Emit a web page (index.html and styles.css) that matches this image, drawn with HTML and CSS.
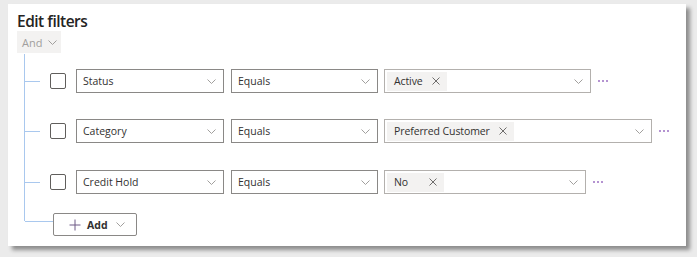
FILE: index.html
```html
<!DOCTYPE html>
<html lang="en">
<head>
    <meta charset="UTF-8">
    <title>Edit filters</title>
    <link rel="stylesheet" href="styles.css">
</head>
<body>
    <div class="frame">
        <div class="card">
            <h1>Edit filters</h1>
            <div class="and-button">And
                <svg class="chevron" width="9" height="5" viewBox="0 0 9 5"><path d="M0.5 0.5 L4.5 4.5 L8.5 0.5" /></svg>
            </div>

            <div class="tree">
                <div class="filter-row">
                    <span class="branch"></span>
                    <span class="checkbox"></span>
                    <div class="select field">
                        <span>Status</span>
                        <svg class="chevron" width="9" height="5" viewBox="0 0 9 5"><path d="M0.5 0.5 L4.5 4.5 L8.5 0.5" /></svg>
                    </div>
                    <div class="select operator">
                        <span>Equals</span>
                        <svg class="chevron" width="9" height="5" viewBox="0 0 9 5"><path d="M0.5 0.5 L4.5 4.5 L8.5 0.5" /></svg>
                    </div>
                    <div class="select value value-short">
                        <span class="pill">Active
                            <svg class="close" width="8" height="8" viewBox="0 0 8 8"><path d="M0.5 0.5 L7.5 7.5 M7.5 0.5 L0.5 7.5" /></svg>
                        </span>
                        <svg class="chevron" width="9" height="5" viewBox="0 0 9 5"><path d="M0.5 0.5 L4.5 4.5 L8.5 0.5" /></svg>
                    </div>
                    <svg class="more" width="12" height="4" viewBox="0 0 12 4"><circle cx="2" cy="2" r="1"/><circle cx="6" cy="2" r="1"/><circle cx="10" cy="2" r="1"/></svg>
                </div>

                <div class="filter-row">
                    <span class="branch"></span>
                    <span class="checkbox"></span>
                    <div class="select field">
                        <span>Category</span>
                        <svg class="chevron" width="9" height="5" viewBox="0 0 9 5"><path d="M0.5 0.5 L4.5 4.5 L8.5 0.5" /></svg>
                    </div>
                    <div class="select operator">
                        <span>Equals</span>
                        <svg class="chevron" width="9" height="5" viewBox="0 0 9 5"><path d="M0.5 0.5 L4.5 4.5 L8.5 0.5" /></svg>
                    </div>
                    <div class="select value value-long">
                        <span class="pill">Preferred Customer
                            <svg class="close" width="8" height="8" viewBox="0 0 8 8"><path d="M0.5 0.5 L7.5 7.5 M7.5 0.5 L0.5 7.5" /></svg>
                        </span>
                        <svg class="chevron" width="9" height="5" viewBox="0 0 9 5"><path d="M0.5 0.5 L4.5 4.5 L8.5 0.5" /></svg>
                    </div>
                    <svg class="more" width="12" height="4" viewBox="0 0 12 4"><circle cx="2" cy="2" r="1"/><circle cx="6" cy="2" r="1"/><circle cx="10" cy="2" r="1"/></svg>
                </div>

                <div class="filter-row">
                    <span class="branch"></span>
                    <span class="checkbox"></span>
                    <div class="select field">
                        <span>Credit Hold</span>
                        <svg class="chevron" width="9" height="5" viewBox="0 0 9 5"><path d="M0.5 0.5 L4.5 4.5 L8.5 0.5" /></svg>
                    </div>
                    <div class="select operator">
                        <span>Equals</span>
                        <svg class="chevron" width="9" height="5" viewBox="0 0 9 5"><path d="M0.5 0.5 L4.5 4.5 L8.5 0.5" /></svg>
                    </div>
                    <div class="select value value-shorter">
                        <span class="pill">No
                            <svg class="close" width="8" height="8" viewBox="0 0 8 8"><path d="M0.5 0.5 L7.5 7.5 M7.5 0.5 L0.5 7.5" /></svg>
                        </span>
                        <svg class="chevron" width="9" height="5" viewBox="0 0 9 5"><path d="M0.5 0.5 L4.5 4.5 L8.5 0.5" /></svg>
                    </div>
                    <svg class="more" width="12" height="4" viewBox="0 0 12 4"><circle cx="2" cy="2" r="1"/><circle cx="6" cy="2" r="1"/><circle cx="10" cy="2" r="1"/></svg>
                </div>

                <div class="add-row">
                    <span class="branch branch-add"></span>
                    <button class="add-button">
                        <svg class="plus" width="12" height="12" viewBox="0 0 12 12"><path d="M6 0.5 V11.5 M0.5 6 H11.5" /></svg>
                        Add
                        <svg class="chevron" width="9" height="5" viewBox="0 0 9 5"><path d="M0.5 0.5 L4.5 4.5 L8.5 0.5" /></svg>
                    </button>
                </div>
            </div>
        </div>
    </div>
</body>
</html>
```

FILE: styles.css
```css
body {
    margin: 0;
    background: #fff;
    font-family: "Open Sans", "Noto Sans", sans-serif;
    color: #323130;
}
.frame {
    width: 697px;
    height: 257px;
    box-sizing: border-box;
    padding: 4px 0 0 8px;
    background: #ebebeb;
}
.card {
    width: 678px;
    height: 242px;
    box-sizing: border-box;
    padding: 8px 0 0 9px;
    background: #fff;
    box-shadow: 4px 4px 4px rgba(0, 0, 0, 0.4);
}
h1 {
    font-size: 15.5px;
    font-weight: 600;
    line-height: 18px;
    margin: 0 0 1px 0;
    letter-spacing: -0.5px;
    color: #252423;
}
.and-button {
    width: 44px;
    height: 22px;
    box-sizing: border-box;
    display: flex;
    align-items: center;
    gap: 6px;
    padding-left: 5px;
    background: #f3f2f1;
    color: #a19f9d;
    font-size: 11px;
    margin-bottom: 1px;
}
.chevron {
    fill: none;
    stroke: #a19f9d;
    stroke-width: 1;
    flex-shrink: 0;
}
.tree {
    position: relative;
    margin-left: 7px;
    padding-top: 15px;
}
.tree::before {
    content: "";
    position: absolute;
    left: 0;
    top: 0;
    bottom: 15px;
    width: 1px;
    background: #a9c8ee;
}
.filter-row {
    display: flex;
    align-items: center;
    height: 24px;
    margin-bottom: 26px;
}
.filter-row:nth-child(2) {
    margin-bottom: 27px;
}
.filter-row:nth-child(3) {
    margin-bottom: 19px;
}
.branch {
    width: 15px;
    height: 1px;
    margin-left: 1px;
    margin-right: 10px;
    background: #a9c8ee;
    flex-shrink: 0;
}
.checkbox {
    width: 16px;
    height: 16px;
    box-sizing: border-box;
    border: 1px solid #605e5c;
    border-radius: 2px;
    margin-right: 10px;
    flex-shrink: 0;
}
.select {
    height: 24px;
    box-sizing: border-box;
    border: 1px solid #8a8886;
    display: flex;
    align-items: center;
    justify-content: space-between;
    padding: 0 7px 0 6px;
    font-size: 10.5px;
    color: #323130;
    flex-shrink: 0;
}
.field {
    width: 148px;
    margin-right: 7px;
}
.operator {
    width: 147px;
    margin-right: 6px;
}
.value {
    border-color: #b3b0ad;
    padding-left: 2px;
    margin-right: 6px;
}
.value-short {
    width: 207px;
}
.value-long {
    width: 268px;
}
.value-shorter {
    width: 202px;
}
.pill {
    height: 19px;
    min-width: 57px;
    box-sizing: border-box;
    display: flex;
    align-items: center;
    justify-content: space-between;
    padding: 0 7px 0 7px;
    background: #f3f2f1;
    letter-spacing: -0.1px;
}
.close {
    fill: none;
    stroke: #605e5c;
    stroke-width: 0.9;
    margin-left: 9px;
}
.more {
    fill: #9b6fc2;
}
.add-row {
    display: flex;
    align-items: flex-start;
}
.branch-add {
    width: 28px;
    margin-top: 8px;
    margin-right: 0;
}
.add-button {
    width: 84px;
    height: 23px;
    box-sizing: border-box;
    display: flex;
    align-items: center;
    padding: 0 0 0 15px;
    border: 1px solid #8a8886;
    border-radius: 2px;
    background: #fff;
    font-family: "Open Sans", "Noto Sans", sans-serif;
    font-size: 10.5px;
    font-weight: 700;
    color: #323130;
}
.plus {
    fill: none;
    stroke: #6e5a86;
    stroke-width: 1;
    margin-right: 6px;
}
.add-button .chevron {
    margin-left: 8px;
}
```
